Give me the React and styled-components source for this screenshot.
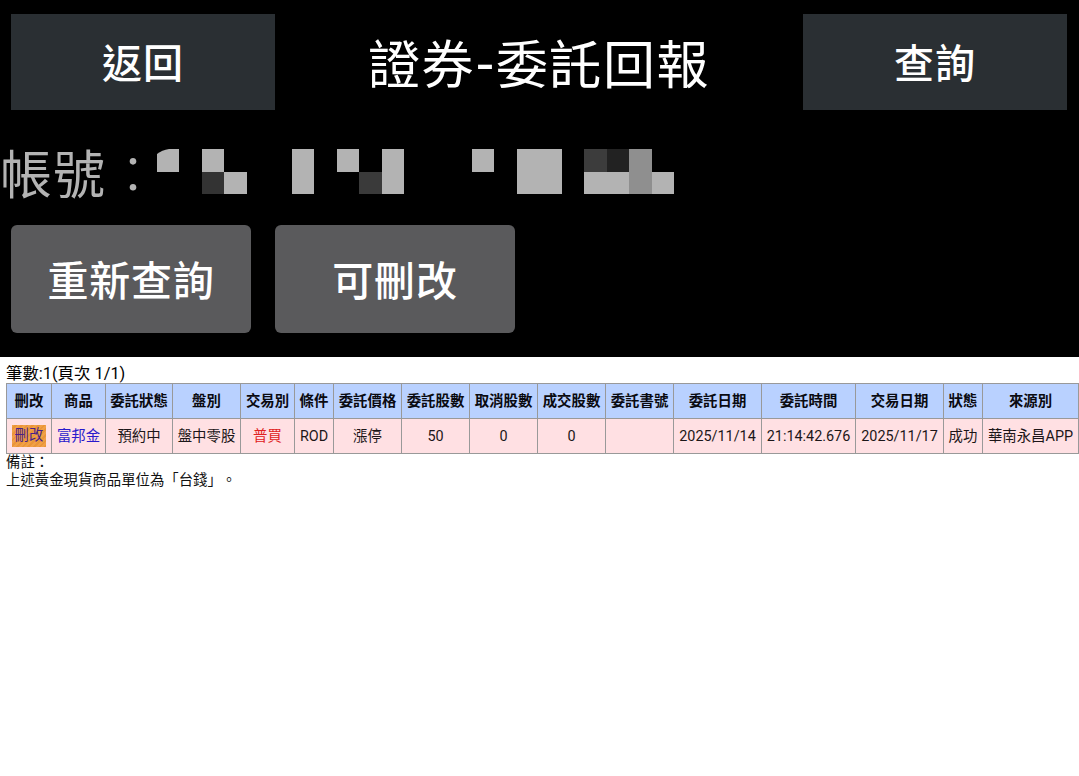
import React from "react";
import styled, { createGlobalStyle } from "styled-components";

const Global = createGlobalStyle`
  *{box-sizing:border-box}
  body{margin:0;background:#fff;font-family:Roboto,"Noto Sans CJK TC",sans-serif;overflow:hidden;text-spacing-trim:space-all;font-kerning:none}
`;
const Screen = styled.div`width:1079px;height:776px;overflow:hidden;background:#fff;`;
const Top = styled.header`height:357px;background:#000;color:#fff;`;
const Bar = styled.div`display:flex;justify-content:space-between;align-items:center;padding:14px 12px 0 11px;height:110px;`;
const BarButton = styled.button`width:264px;height:96px;border:0;padding:5px 0 0;background:#2a2f33;color:#fff;letter-spacing:1px;font:500 40px/60px Roboto,"Noto Sans CJK TC",sans-serif;`;
const Title = styled.h1`margin:0;padding-top:9px;font-weight:400;font-size:52px;letter-spacing:1.6px;line-height:88px;height:96px;white-space:nowrap;`;
const Dash = styled.span`font-size:58px;line-height:1;margin:0 1px 0 2px;`;
const Account = styled.div`height:115px;padding-top:29px;display:flex;color:#b3b3b3;`;
const Label = styled.span`font-size:52px;letter-spacing:1px;line-height:75px;width:157px;white-space:nowrap;`;
const Colon = styled.span`font-weight:300;margin-left:1px;`;
const Mosaic = styled.svg`width:520px;height:48px;margin-top:10px;`;
const Actions = styled.div`display:flex;gap:24px;padding-left:11px;`;
const Action = styled.button`width:240px;height:108px;border:0;border-radius:6px;padding:6px 0 0;background:#5a5a5c;color:#fff;letter-spacing:.8px;font:500 41px/60px Roboto,"Noto Sans CJK TC",sans-serif;`;
const Report = styled.main`padding:6px 0 0 6px;color:#000;`;
const Count = styled.div`font-size:16.4px;line-height:22px;height:20px;`;
const Table = styled.table`border-collapse:collapse;table-layout:fixed;width:1073px;font-size:14.4px;`;
const Cell = styled.td`height:35px;padding:0 0 ${p => (p.$cjk ? 3 : 0)}px 0;border:1px solid #999;text-align:center;white-space:nowrap;background:#ffe0e3;color:${p => p.$color || "#1c1618"};`;
const Head = styled(Cell).attrs({ as: "th" })`background:#b9d1ff;font-weight:700;color:#0a0a10;padding-bottom:3px;`;
const Tag = styled.span`display:block;width:34px;height:22px;margin:0 0 0 5px;background:repeating-linear-gradient(135deg,#f0a047 0 2px,#ea9539 2px 4px);color:#4a1f8a;line-height:21px;`;
const Note = styled.div`font-size:14.4px;line-height:18px;color:#111;`;

const columns = [
  ["刪改", 45], ["商品", 54], ["委託狀態", 67], ["盤別", 68], ["交易別", 54], ["條件", 39], ["委託價格", 68], ["委託股數", 68],
  ["取消股數", 68], ["成交股數", 68], ["委託書號", 68], ["委託日期", 88], ["委託時間", 94], ["交易日期", 88], ["狀態", 39], ["來源別", 96],
];
const order = ["刪改", "富邦金", "預約中", "盤中零股", "普買", "ROD", "漲停", "50", "0", "0", "", "2025/11/14", "21:14:42.676", "2025/11/17", "成功", "華南永昌APP"];
const colors = { 1: "#2a1acc", 4: "#e02020" };
const isCjk = text => /[\u4e00-\u9fff]/.test(text);
const blocks = [
  [45, 0, 22, 23, "#b3b3b3"], [45, 23, 22, 22, "#333"], [67, 23, 23, 22, "#b3b3b3"], [135, 0, 22, 45, "#b3b3b3"],
  [180, 0, 22, 23, "#b3b3b3"], [202, 23, 23, 22, "#3a3a3a"], [225, 0, 22, 45, "#b3b3b3"], [315, 0, 22, 23, "#b3b3b3"],
  [360, 0, 45, 45, "#b3b3b3"], [427, 0, 23, 23, "#3c3c3c"], [450, 0, 22, 23, "#222"], [472, 0, 23, 45, "#8f8f8f"],
  [427, 23, 45, 22, "#b3b3b3"], [495, 23, 22, 22, "#b3b3b3"],
];

export default function App() {
  return (
    <Screen>
      <Global />
      <Top>
        <Bar><BarButton>返回</BarButton><Title>證券<Dash>-</Dash>委託回報</Title><BarButton>查詢</BarButton></Bar>
        <Account>
          <Label>帳號<Colon>：</Colon></Label>
          <Mosaic viewBox="0 0 520 48">
            <path d="M0 5Q5 1 12 0H22V23H0Z" fill="#b3b3b3" />
            {blocks.map(([x, y, w, h, f], i) => <rect key={i} x={x} y={y} width={w} height={h} fill={f} />)}
          </Mosaic>
        </Account>
        <Actions><Action>重新查詢</Action><Action>可刪改</Action></Actions>
      </Top>
      <Report>
        <Count>筆數:1(頁次 1/1)</Count>
        <Table>
          <colgroup>{columns.map(([n, w]) => <col key={n} style={{ width: w }} />)}</colgroup>
          <thead><tr>{columns.map(([n]) => <Head key={n}>{n}</Head>)}</tr></thead>
          <tbody><tr>{order.map((v, i) => <Cell key={i} $color={colors[i]} $cjk={i > 0 && isCjk(v)}>{i === 0 ? <Tag>{v}</Tag> : v}</Cell>)}</tr></tbody>
        </Table>
        <Note>備註：</Note>
        <Note>上述黃金現貨商品單位為「台錢」。</Note>
      </Report>
    </Screen>
  );
}
